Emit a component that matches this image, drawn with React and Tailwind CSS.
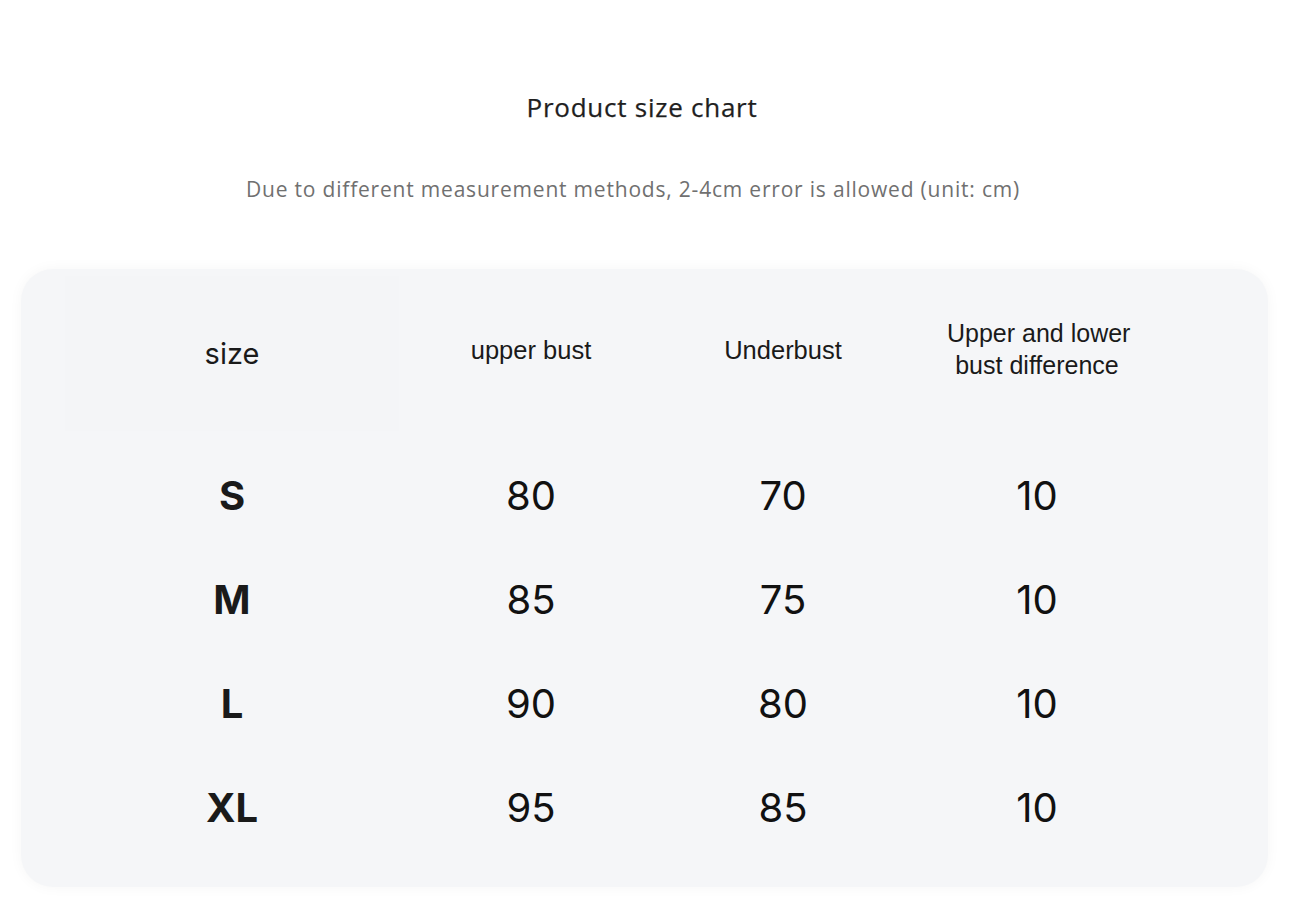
const rows = [
  { size: 'S', upper: '80', under: '70', diff: '10' },
  { size: 'M', upper: '85', under: '75', diff: '10' },
  { size: 'L', upper: '90', under: '80', diff: '10' },
  { size: 'XL', upper: '95', under: '85', diff: '10' },
];

export default function App() {
  return (
    <div className="w-[1290px] h-[912px] bg-white font-['Open_Sans',sans-serif] overflow-hidden">
      <div className="pt-[90px] text-center">
        <h1 className="text-[26px] leading-[34px] font-medium text-[#1f1f1f] tracking-[0.75px] pr-[6px] [-webkit-text-stroke:0.25px_#1f1f1f]">Product size chart</h1>
        <p className="mt-[51px] text-[21px] leading-[28px] text-[#707070] tracking-[0.8px] pr-[24px]">
          Due to different measurement methods, 2-4cm error is allowed (unit: cm)
        </p>
      </div>

      <div className="mt-[66px] ml-[21px] w-[1247px] rounded-[32px] bg-[#f5f6f8] pb-[27px] shadow-[0_0_14px_rgba(0,0,0,0.04)]">
        <div className="grid grid-cols-[422px_176px_328px_180px] h-[162px] items-center text-center text-[#1a1a1a] font-['Liberation_Sans',sans-serif]">
          <div className="text-[29px] font-['Inter',sans-serif] bg-[#f4f5f7] mx-[44px] h-[155px] mt-[7px] flex items-center justify-center">size</div>
          <div className="text-[25.5px] pt-[1px]">upper bust</div>
          <div className="text-[25.5px] pt-[1px]">Underbust</div>
          <div className="text-[25px] leading-[32px] whitespace-nowrap pb-[3px]">
            Upper and lower
            <br />
            bust difference
          </div>
        </div>
        <div className="mt-[13px]">
          {rows.map((r) => (
            <div
              key={r.size}
              className="grid grid-cols-[422px_176px_328px_180px] h-[104px] items-center text-center text-[#111] font-['Inter',sans-serif]"
            >
              <div className="text-[40px] font-bold text-[#1a1a1a]">{r.size}</div>
              <div className="text-[40px]">{r.upper}</div>
              <div className="text-[40px]">{r.under}</div>
              <div className="text-[40px]">{r.diff}</div>
            </div>
          ))}
        </div>
      </div>
    </div>
  );
}
